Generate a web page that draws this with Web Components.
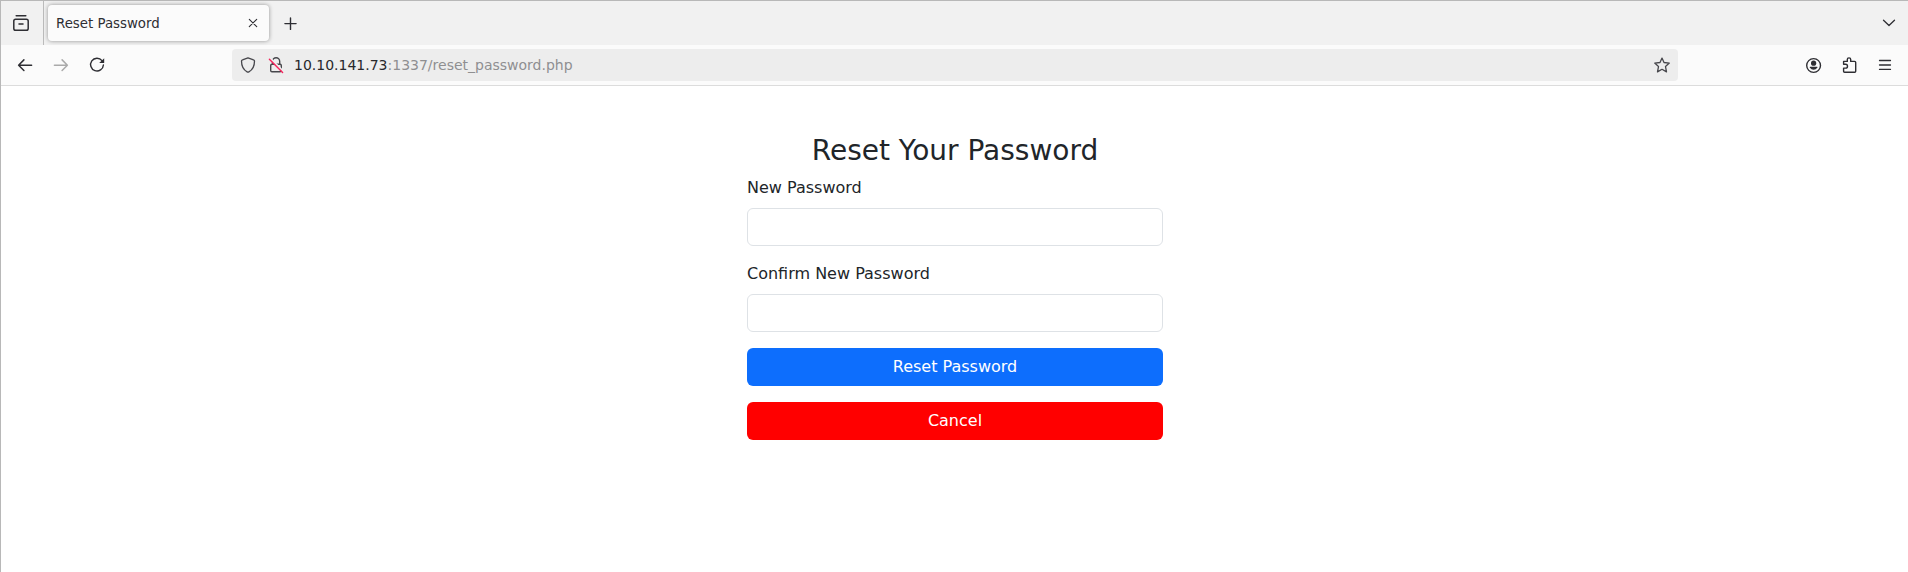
<!DOCTYPE html>
<html lang="en">
<head>
<meta charset="utf-8">
<title>Reset Password</title>
<style>
html,body{margin:0;height:100%}
body{font-family:"DejaVu Sans",sans-serif;background:#fff;overflow:hidden}
</style>
</head>
<body>
<browser-window></browser-window>
<script>
const ICONS = {
  view: '<path d="M5.2 2.8h9.6" stroke-width="1.5"/><rect x="2.8" y="6.2" width="14.4" height="11.1" rx="1.8" stroke-width="1.5"/><path d="M8 11h4" stroke-width="1.5"/>',
  close: '<path d="M6.3 6.3l7.400 7.400M13.700 6.300l-7.400 7.400" stroke-width="1.100"/>',
  plus: '<path d="M9.5 5v11.400M3.9 10.600h11.200" stroke-width="1.4"/>',
  chevron: '<path d="M4.5 7.2l5.5 5.3 5.5-5.3" stroke-width="1.3"/>',
  back: '<path d="M16.600 10.2H3.6M8.900 4.900L3.6 10.2l5.300 5.300" stroke-width="1.5"/>',
  forward: '<path d="M3.400 10.2h13M11.100 4.900l5.300 5.300-5.300 5.300" stroke-width="1.5"/>',
  reload: '<path d="M15 5.6a6.4 6.4 0 1 0 1.4 4.4" stroke-width="1.4"/><path d="M17.2 3.2v4.9h-5z" fill="currentColor" stroke="none"/>',
  shield: '<path d="M10 2.8l5.5 2c.6.2 1 .7 1 1.3 0 5-1.900 8.800-5.600 10.800q-.9.500-1.800 0C5.400 14.900 3.500 11.100 3.500 6.100c0-.6.4-1.100 1-1.300z" stroke-width="1.3"/>',
  lock: '<path d="M6.500 9.200V6.400a3.600 3.600 0 0 1 7.200 0v2.800" stroke-width="1.400"/><rect x="4.700" y="9.300" width="10.600" height="7.400" rx="1.300" stroke-width="1.400"/><path d="M4.200 3.200l13.400 13.400" stroke="#ededed" stroke-width="2"/><path d="M3.400 4.200l13.200 13.400" stroke="#f5245c" stroke-width="1.400"/>',
  star: '<path d="M10 3.100l2 4.400 5.300.6-3.800 3.500 1 5.300L10 14.300l-4.500 2.600 1-5.300-3.800-3.500 5.300-.6z" stroke-width="1.300"/>',
  account: '<circle cx="9.600" cy="10.500" r="6.900" stroke-width="1.400"/><g fill="currentColor" stroke="none"><circle cx="9.600" cy="8.200" r="2.600"/><path d="M6.500 11.800h6.200c.7 0 .9.500.6 1a4.500 4.500 0 0 1-7.400 0c-.3-.5-.1-1 .6-1z"/></g>',
  puzzle: '<path d="M3.600 6.400h3.700V4.600a1.700 1.700 0 0 1 3.400 0v1.800h4c.6 0 1 .4 1 1v8.900c0 .6-.4 1-1 1H4.600c-.6 0-1-.4-1-1v-3.200h2a1.900 1.900 0 0 0 0-3.800h-2z" stroke-width="1.400"/>',
  menu: '<path d="M4.500 5.500h11M4.500 10h11M4.500 14.400h11" stroke-width="1.300"/>'
};
function define(name, markup, setup) {
  customElements.define(name, class extends HTMLElement {
    connectedCallback() {
      if (this.shadowRoot) return;
      const t = document.createElement('template');
      t.innerHTML = markup;
      this.attachShadow({ mode: 'open' }).append(t.content.cloneNode(true));
      if (setup) setup(this);
    }
  });
}

define('ui-icon', `<style>
:host{display:block;width:20px;height:20px;flex:none}
svg{display:block;width:20px;height:20px;fill:none;stroke:currentColor;stroke-linecap:round;stroke-linejoin:round}
</style><svg viewBox="0 0 20 20" aria-hidden="true"></svg>`,
  el => { el.shadowRoot.querySelector('svg').innerHTML = ICONS[el.getAttribute('name')]; });

define('browser-tab', `<style>
:host{display:flex;align-items:center;justify-content:space-between;box-sizing:border-box;width:221px;height:36px;padding:0 6px 0 8px;border-radius:4px;background:#fbfbfb;box-shadow:0 0 4px rgba(0,0,0,.4);font-size:13.333px;color:#2e2e33}
span{white-space:nowrap}
</style><span><slot></slot></span><ui-icon name="close"></ui-icon>`);

define('tab-strip', `<style>
:host{display:flex;align-items:center;height:44px;background:#f1f1f1;color:#2e2e33;padding-right:9px}
.view{display:flex;align-items:center;box-sizing:border-box;width:43px;height:44px;padding-left:10px;border-right:1px solid #bbb;margin-right:4px}
.add{margin-left:12px}
.list{margin-left:auto}
</style><div class="view"><ui-icon name="view"></ui-icon></div><slot></slot><ui-icon class="add" name="plus"></ui-icon><ui-icon class="list" name="chevron"></ui-icon>`);

define('url-bar', `<style>
:host{display:flex;align-items:center;box-sizing:border-box;height:32px;padding:0 6px;border-radius:4px;background:#ededed;color:#47474c}
.lock{margin:0 8px}
.url{flex:1;font-size:14px;white-space:nowrap;color:#8f8f91}
::slotted(b){font-weight:400;color:#28282c}
</style><ui-icon name="shield"></ui-icon><ui-icon class="lock" name="lock"></ui-icon><div class="url"><slot></slot></div><ui-icon name="star"></ui-icon>`);

define('nav-bar', `<style>
:host{display:flex;align-items:center;height:40px;padding:0 13px 0 14px;background:#fbfbfb;border-bottom:1px solid #dcdcdc;color:#2e2e33}
.group{display:flex;gap:16px}
.off{color:#aaa}
.address{flex:1;margin:0 126px 0 125px}
</style><div class="group"><ui-icon name="back"></ui-icon><ui-icon class="off" name="forward"></ui-icon><ui-icon name="reload"></ui-icon></div>
<div class="address"><slot></slot></div>
<div class="group"><ui-icon name="account"></ui-icon><ui-icon name="puzzle"></ui-icon><ui-icon name="menu" style="margin-left:-1px"></ui-icon></div>`);

define('form-field', `<style>
:host{display:block;margin-bottom:16px}
label{display:block;line-height:24px;margin-bottom:8px}
input{display:block;box-sizing:border-box;width:100%;height:38px;padding:6px 12px;border:1px solid #dee2e6;border-radius:6px;background:#fff;font:inherit;color:inherit;outline:0}
</style><label for="f"><slot></slot></label><input id="f" type="password">`);

define('form-button', `<style>
:host{display:block;margin-bottom:16px}
button{display:block;width:100%;height:38px;padding:6px 12px;border:0;border-radius:6px;background:var(--fill,#0d6efd);color:#fff;font:inherit;line-height:24px}
</style><button type="button"><slot></slot></button>`);

define('reset-form', `<style>
:host{display:block;width:416px;margin-left:calc(50% - 207.5px);padding-top:48.400px;font-size:16px;color:#212529}
h2{margin:0 0 8px;font-size:28px;font-weight:400;line-height:1.2;text-align:center}
</style><h2>Reset Your Password</h2>
<form-field>New Password</form-field>
<form-field>Confirm New Password</form-field>
<form-button>Reset Password</form-button>
<form-button style="--fill:#f00">Cancel</form-button>`);

define('browser-window', `<style>
:host{display:block;box-sizing:border-box;height:100vh;border:solid #b8b8b8;border-width:1px 0 0 1px;background:#fff}
</style><tab-strip><browser-tab>Reset Password</browser-tab></tab-strip>
<nav-bar><url-bar><b>10.10.141.73</b>:1337/reset_password.php</url-bar></nav-bar>
<reset-form></reset-form>`);
</script>
</body>
</html>
